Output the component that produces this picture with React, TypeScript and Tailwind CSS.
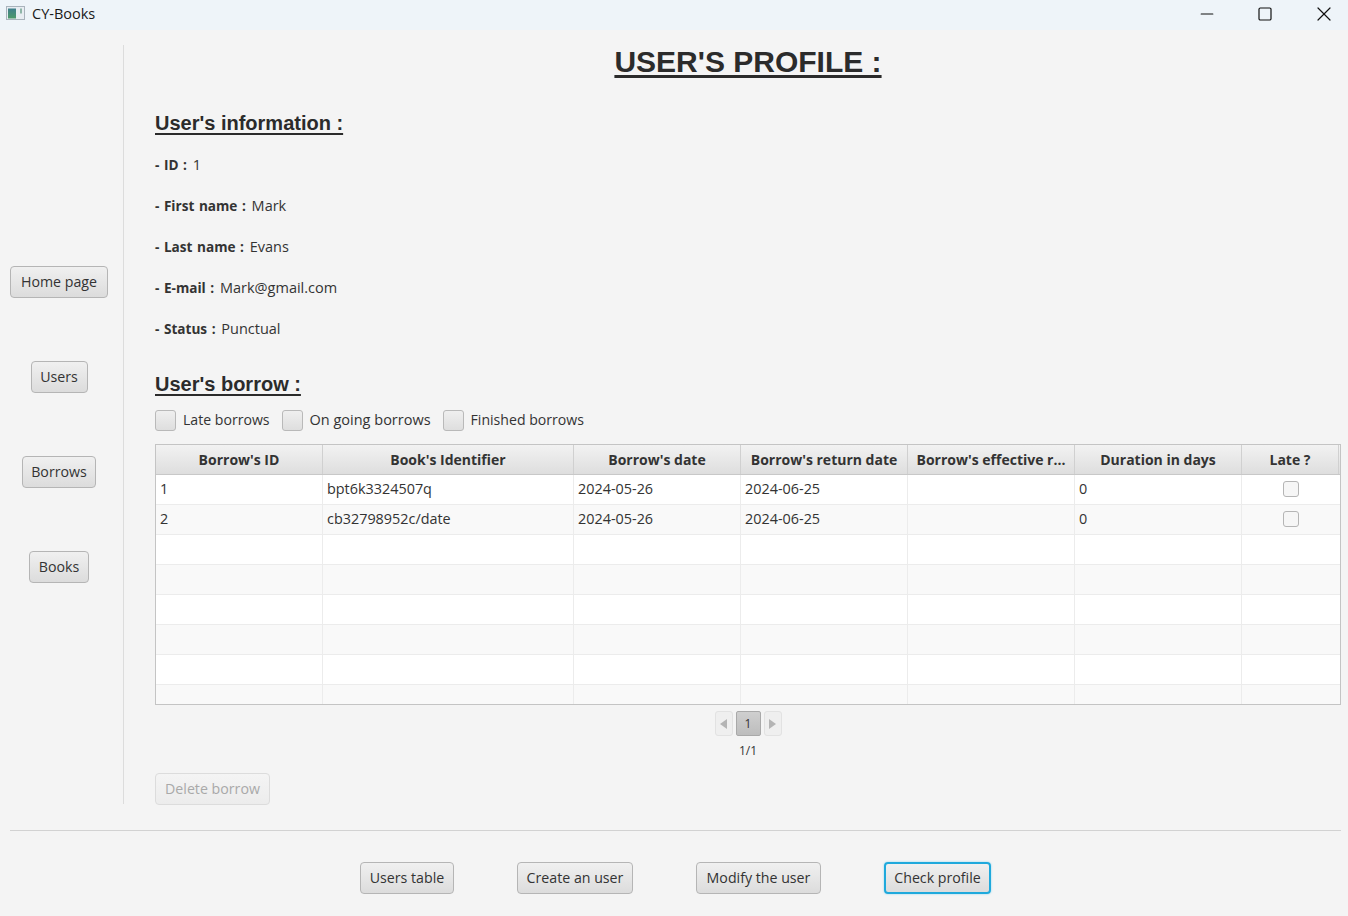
import React from 'react';
import { Minus, Square, X } from 'lucide-react';

const uiFont = 'font-["Open_Sans","Noto_Sans",sans-serif]';

const columns = [
  "Borrow's ID",
  "Book's Identifier",
  "Borrow's date",
  "Borrow's return date",
  "Borrow's effective r...",
  'Duration in days',
  'Late ?',
];

const gridCols = 'grid grid-cols-[167px_251px_167px_167px_167px_167px_97px]';

const rows = [
  ['1', 'bpt6k3324507q', '2024-05-26', '2024-06-25', '', '0'],
  ['2', 'cb32798952c/date', '2024-05-26', '2024-06-25', '', '0'],
  ['', '', '', '', '', ''],
  ['', '', '', '', '', ''],
  ['', '', '', '', '', ''],
  ['', '', '', '', '', ''],
  ['', '', '', '', '', ''],
  ['', '', '', '', '', ''],
];

const info = [
  ['- ID :', '1'],
  ['- First name :', 'Mark'],
  ['- Last name :', 'Evans'],
  ['- E-mail :', 'Mark@gmail.com'],
  ['- Status :', 'Punctual'],
];

function FxButton({ label, focused, disabled, width }: { label: string; focused?: boolean; disabled?: boolean; width: string }) {
  let look = 'border border-[#b5b5b5] bg-gradient-to-b from-[#f0f0f0] to-[#dcdcdc] text-[#333333]';
  if (focused) look = 'border-2 border-[#1fa9dc] bg-gradient-to-b from-[#f0f0f0] to-[#dcdcdc] text-[#333333] shadow-[0_0_2px_#7fd0ee]';
  if (disabled) look = 'border border-[#dcdcdc] bg-gradient-to-b from-[#f4f4f4] to-[#ececec] text-[#a9a9a9]';
  return (
    <button className={`h-8 ${width} shrink-0 rounded-[4px] pb-[1px] text-[14.2px] whitespace-nowrap ${look}`}>
      {label}
    </button>
  );
}

function FxCheckbox({ label, size }: { label: string; size: string }) {
  return (
    <div className="flex h-[21px] items-center gap-[7px]">
      <div className="h-[21px] w-[21px] rounded-[3px] border border-[#b9b9b9] bg-gradient-to-b from-[#efefef] to-[#dedede]" />
      <span className={`pb-[2px] ${size} leading-5 text-[#333333]`}>{label}</span>
    </div>
  );
}

export default function App() {
  return (
    <div className={`flex h-[916px] w-[1348px] flex-col overflow-hidden bg-[#f4f4f4] ${uiFont}`}>
      {/* Window title bar */}
      <div className="flex h-[30px] shrink-0 items-center justify-between bg-[#eef4f9] pb-[3px]">
        <div className="flex items-center">
          <svg className="ml-[6px]" width="19" height="15" viewBox="0 0 19 15">
            <rect x="0.5" y="0.5" width="18" height="13" fill="#e8edf2" stroke="#a9b3bc" />
            <defs>
              <linearGradient id="appIcon" x1="0" y1="0" x2="0" y2="1">
                <stop offset="0" stopColor="#3f7f8c" />
                <stop offset="1" stopColor="#4e9a6a" />
              </linearGradient>
            </defs>
            <rect x="2" y="2.5" width="8" height="10" fill="url(#appIcon)" />
            <rect x="14" y="2.5" width="2" height="5" fill="#8fb5a8" />
          </svg>
          <span className="ml-[7px] text-[14.5px] text-[#1a1a1a]">CY-Books</span>
        </div>
        <div className="-mr-[5px] flex items-center">
          <div className="flex w-[56px] justify-center"><Minus size={20} strokeWidth={1.3} color="#111111" /></div>
          <div className="flex w-[59px] justify-center"><Square size={16} strokeWidth={1.8} color="#111111" /></div>
          <div className="flex w-[59px] justify-center"><X size={24} strokeWidth={1.2} color="#111111" /></div>
        </div>
      </div>

      {/* Main area */}
      <div className="flex pt-[15px]">
        <div className="flex h-[759px] w-[124px] shrink-0 flex-col items-center gap-[63px] border-r border-[#dcdcdc] pt-[221px] pr-[5px]">
          <FxButton label="Home page" width="w-[98px]" />
          <FxButton label="Users" width="w-[57px]" />
          <FxButton label="Borrows" width="w-[74px]" />
          <FxButton label="Books" width="w-[60px]" />
        </div>

        <div className="ml-[31px] flex w-[1186px] flex-col">
          <h1 className='text-center font-["Liberation_Sans",sans-serif] text-[30px] leading-[33px] font-bold text-[#2b2b2b] underline underline-offset-[3px]'>
            USER'S PROFILE :
          </h1>

          <h2 className='mt-[32px] font-["Liberation_Sans",sans-serif] text-[20px] leading-[26px] font-bold text-[#2b2b2b] underline underline-offset-[3px]'>
            User's information :
          </h2>

          <div className="mt-[19px] flex flex-col gap-[21px]">
            {info.map(([name, value]) => (
              <div key={name} className="h-5 text-[14.5px] leading-5 text-[#333333]">
                <span className="text-[13.6px] font-bold [word-spacing:1px]">{name}</span> <span className="ml-[2px]">{value}</span>
              </div>
            ))}
          </div>

          <h2 className='mt-[32px] font-["Liberation_Sans",sans-serif] text-[20px] leading-[26px] font-bold text-[#2b2b2b] underline underline-offset-[3px]'>
            User's borrow :
          </h2>

          <div className="mt-[13px] flex items-center gap-[12px]">
            <FxCheckbox label="Late borrows" size="text-[14.1px]" />
            <FxCheckbox label="On going borrows" size="text-[14.5px]" />
            <FxCheckbox label="Finished borrows" size="text-[14.1px]" />
          </div>

          {/* Borrow table */}
          <div className="mt-[13px] h-[261px] overflow-hidden border border-[#c4c4c4] bg-white">
            <div className={`${gridCols} h-[30px] border-b border-[#c8c8c8] bg-gradient-to-b from-[#f2f2f2] to-[#dedede]`}>
              {columns.map((c) => (
                <div key={c} className="flex items-center justify-center border-r border-[#d0d0d0] pb-[1px] text-[14px] font-bold whitespace-nowrap text-[#333333]">
                  {c}
                </div>
              ))}
            </div>
            {rows.map((row, i) => (
              <div key={i} className={`${gridCols} h-[30px] border-b border-[#ececec] ${i % 2 === 1 ? 'bg-[#f9f9f9]' : 'bg-white'}`}>
                {row.map((cell, j) => (
                  <div key={j} className="flex items-center border-r border-[#ececec] pb-[1px] pl-[4px] text-[14.4px] text-[#333333]">
                    {cell}
                  </div>
                ))}
                <div className="flex items-center justify-center pb-[1px]">
                  {i < 2 && <div className="h-4 w-4 rounded-[3px] border border-[#b5b5b5] bg-[#f6f6f6]" />}
                </div>
              </div>
            ))}
          </div>

          {/* Pagination */}
          <div className="mt-[6px] flex items-center justify-center gap-[3px]">
            <div className="flex h-[25px] w-[18px] items-center justify-center rounded-[3px] border border-[#e2e2e2] bg-[#efefef]">
              <svg width="7" height="10" viewBox="0 0 7 10"><path d="M7 0v10L0 5z" fill="#b4b4b4" /></svg>
            </div>
            <div className="flex h-[25px] w-[25px] items-center justify-center rounded-[2px] border border-[#a9a9a9] bg-gradient-to-b from-[#cfcfcf] to-[#bdbdbd] text-[12px] text-[#333333]">
              1
            </div>
            <div className="flex h-[25px] w-[18px] items-center justify-center rounded-[3px] border border-[#e2e2e2] bg-[#efefef]">
              <svg width="7" height="10" viewBox="0 0 7 10"><path d="M0 0v10l7-5z" fill="#b4b4b4" /></svg>
            </div>
          </div>
          <div className="mt-[7px] text-center text-[12px] leading-4 text-[#333333]">1/1</div>

          <div className="mt-[14px]">
            <FxButton label="Delete borrow" width="w-[115px]" disabled />
          </div>
        </div>
      </div>

      {/* Bottom actions */}
      <div className="mt-[25px] mr-[7px] ml-[10px] border-t border-[#d2d2d2]" />
      <div className="mt-[31px] ml-[360px] flex gap-[63px]">
        <FxButton label="Users table" width="w-[94px]" />
        <FxButton label="Create an user" width="w-[116px]" />
        <FxButton label="Modify the user" width="w-[125px]" />
        <FxButton label="Check profile" width="w-[107px]" focused />
      </div>
    </div>
  );
}
